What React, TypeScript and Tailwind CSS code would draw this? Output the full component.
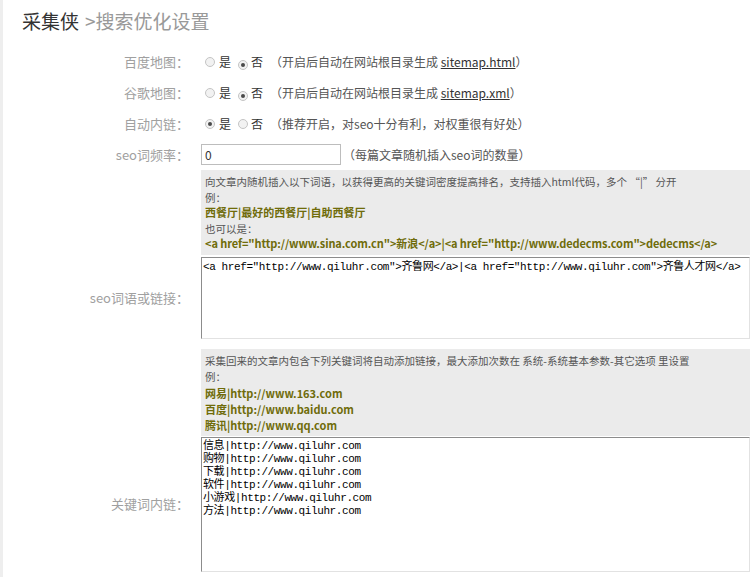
import React from 'react';

const ui = { fontFamily: '"Noto Sans CJK SC", "Microsoft YaHei", sans-serif' };
const mono = { fontFamily: '"Liberation Mono", "Noto Sans CJK SC", monospace' };

function Radio({ checked }: { checked?: boolean }) {
  return (
    <span className="inline-flex h-[10px] w-[10px] items-center justify-center rounded-full border border-[#c4c4c4] bg-[#f2f2f2]">
      {checked && <span className="h-[4px] w-[4px] rounded-full bg-[#4a4a4a]" />}
    </span>
  );
}

function Row({ label, children, tall }: { label?: string; children: React.ReactNode; tall?: boolean }) {
  return (
    <div className={`flex ${tall ? '' : 'h-[31px]'} items-center`}>
      <div className="w-[186px] shrink-0 text-right text-[13px] text-[#a0a0a0]">{label}</div>
      <div className="ml-[12px] flex min-w-0 flex-1 items-center">{children}</div>
    </div>
  );
}

function YesNo({ yes, note }: { yes: boolean; note: React.ReactNode }) {
  return (
    <div className="flex items-center pl-[4px] text-[12px] text-[#333]">
      <Radio checked={yes} />
      <span className="ml-[4px]">是</span>
      <span className="ml-[7px]"><Radio checked={!yes} /></span>
      <span className="ml-[3px]">否</span>
      <span className="ml-[7px] text-[#555]">{note}</span>
    </div>
  );
}

const seoLinks = '<a href="http://www.qiluhr.com">齐鲁网</a>|<a href="http://www.qiluhr.com">齐鲁人才网</a>';
const keyLinks = [
  '信息|http://www.qiluhr.com',
  '购物|http://www.qiluhr.com',
  '下载|http://www.qiluhr.com',
  '软件|http://www.qiluhr.com',
  '小游戏|http://www.qiluhr.com',
  '方法|http://www.qiluhr.com',
].join('\n');

export default function App() {
  return (
    <div className="flex h-[577px] w-[750px] overflow-hidden bg-white" style={ui}>
      <div className="w-[3px] shrink-0 bg-[#eeeeee]" />
      <div className="flex min-w-0 flex-1 flex-col">
        <div className="flex h-[46px] items-start pl-[19px] pt-[7px] text-[19px] leading-[27px]">
          <span className="text-[#333]">采集侠</span>
          <span className="ml-[6px] text-[#999]">&gt;搜索优化设置</span>
        </div>

        <Row label="百度地图：">
          <YesNo yes={false} note={<>（开启后自动在网站根目录生成 <u className="text-[#333]">sitemap.html</u>）</>} />
        </Row>
        <Row label="谷歌地图：">
          <YesNo yes={false} note={<>（开启后自动在网站根目录生成 <u className="text-[#333]">sitemap.xml</u>）</>} />
        </Row>
        <Row label="自动内链：">
          <YesNo yes={true} note="（推荐开启，对seo十分有利，对权重很有好处）" />
        </Row>
        <Row label="seo词频率：">
          <input
            readOnly
            value="0"
            className="h-[21px] w-[140px] border border-[#bdbdbd] px-[3px] text-[12px] text-[#333] outline-none"
            style={ui}
          />
          <span className="ml-[2px] text-[12px] text-[#555]">（每篇文章随机插入seo词的数量）</span>
        </Row>

        <Row tall>
          <div className="flex-1 bg-[#ebebeb] px-[4px] pb-[3px] pt-[4px] text-[11px] leading-[15.5px] text-[#555]">
            <div className="text-[10.5px]">向文章内随机插入以下词语，以获得更高的关键词密度提高排名，支持插入html代码，多个 “|” 分开</div>
            <div className="text-[10.5px]">例：</div>
            <div className="font-bold text-[#6f6c0a]">西餐厅|最好的西餐厅|自助西餐厅</div>
            <div className="text-[10.5px]">也可以是：</div>
            <div className="whitespace-nowrap font-bold tracking-[-0.1px] text-[#6f6c0a]">
              &lt;a href="http://www.sina.com.cn"&gt;新浪&lt;/a&gt;|&lt;a href="http://www.dedecms.com"&gt;dedecms&lt;/a&gt;
            </div>
          </div>
        </Row>
        <div className="mt-[2px]">
          <Row label="seo词语或链接：" tall>
            <textarea
              readOnly
              value={seoLinks}
              className="h-[82px] flex-1 resize-none overflow-hidden border border-b-[#e2e2e2] border-l-[#8c8c8c] border-r-[#e2e2e2] border-t-[#8c8c8c] px-[1px] pt-[3px] text-[11px] leading-[13px] tracking-[-0.4px] text-black outline-none"
              style={mono}
            />
          </Row>
        </div>

        <div className="mt-[10px]">
          <Row tall>
            <div className="flex-1 bg-[#ebebeb] px-[4px] pb-[3px] pt-[4px] text-[11px] leading-[16px] text-[#555]">
              <div className="text-[10.5px]">采集回来的文章内包含下列关键词将自动添加链接，最大添加次数在 系统-系统基本参数-其它选项 里设置</div>
              <div className="text-[10.5px]">例：</div>
              <div className="font-bold text-[#6f6c0a]">网易|http://www.163.com</div>
              <div className="font-bold text-[#6f6c0a]">百度|http://www.baidu.com</div>
              <div className="font-bold text-[#6f6c0a]">腾讯|http://www.qq.com</div>
            </div>
          </Row>
        </div>
        <div className="mt-[1px]">
          <Row label="关键词内链：" tall>
            <textarea
              readOnly
              value={keyLinks}
              className="h-[135px] flex-1 resize-none overflow-hidden border border-b-[#e2e2e2] border-l-[#8c8c8c] border-r-[#e2e2e2] border-t-[#8c8c8c] px-[1px] pt-[2px] text-[11px] leading-[13px] tracking-[-0.4px] text-black outline-none"
              style={mono}
            />
          </Row>
        </div>
      </div>
    </div>
  );
}
